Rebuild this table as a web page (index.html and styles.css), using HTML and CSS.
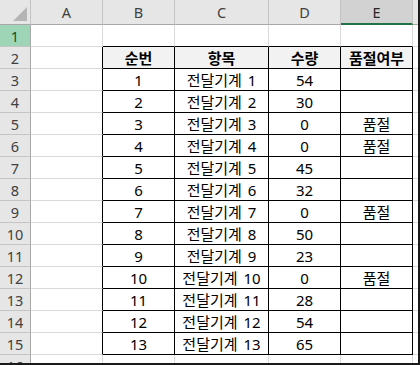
FILE: index.html
```html
<!DOCTYPE html>
<html lang="ko">
<head>
<meta charset="utf-8">
<link rel="stylesheet" href="styles.css">
</head>
<body>
<div class="sheet">
  <div class="grid">
    <div class="corner"><svg class="tri" width="14" height="14" viewBox="0 0 14 14"><polygon points="14,0 14,14 0,14" fill="#b5b5b5"/></svg></div>
    <div class="ch">A</div>
    <div class="ch">B</div>
    <div class="ch">C</div>
    <div class="ch">D</div>
    <div class="ch sel">E</div>
    <div class="ch end"></div>

    <div class="rh sel">1</div>
    <div class="c"></div><div class="c bb"></div><div class="c bb"></div><div class="c bb"></div><div class="c bb"></div><div class="c x"></div>

    <div class="rh">2</div>
    <div class="c br"></div><div class="c t th">순번</div><div class="c t th">항목</div><div class="c t th">수량</div><div class="c t th">품절여부</div><div class="c x"></div>

    <div class="rh">3</div>
    <div class="c br"></div><div class="c t">1</div><div class="c t">전달기계 1</div><div class="c t">54</div><div class="c t"></div><div class="c x"></div>
    <div class="rh">4</div>
    <div class="c br"></div><div class="c t">2</div><div class="c t">전달기계 2</div><div class="c t">30</div><div class="c t"></div><div class="c x"></div>
    <div class="rh">5</div>
    <div class="c br"></div><div class="c t">3</div><div class="c t">전달기계 3</div><div class="c t">0</div><div class="c t">품절</div><div class="c x"></div>
    <div class="rh">6</div>
    <div class="c br"></div><div class="c t">4</div><div class="c t">전달기계 4</div><div class="c t">0</div><div class="c t">품절</div><div class="c x"></div>
    <div class="rh">7</div>
    <div class="c br"></div><div class="c t">5</div><div class="c t">전달기계 5</div><div class="c t">45</div><div class="c t"></div><div class="c x"></div>
    <div class="rh">8</div>
    <div class="c br"></div><div class="c t">6</div><div class="c t">전달기계 6</div><div class="c t">32</div><div class="c t"></div><div class="c x"></div>
    <div class="rh">9</div>
    <div class="c br"></div><div class="c t">7</div><div class="c t">전달기계 7</div><div class="c t">0</div><div class="c t">품절</div><div class="c x"></div>
    <div class="rh">10</div>
    <div class="c br"></div><div class="c t">8</div><div class="c t">전달기계 8</div><div class="c t">50</div><div class="c t"></div><div class="c x"></div>
    <div class="rh">11</div>
    <div class="c br"></div><div class="c t">9</div><div class="c t">전달기계 9</div><div class="c t">23</div><div class="c t"></div><div class="c x"></div>
    <div class="rh">12</div>
    <div class="c br"></div><div class="c t">10</div><div class="c t">전달기계 10</div><div class="c t">0</div><div class="c t">품절</div><div class="c x"></div>
    <div class="rh">13</div>
    <div class="c br"></div><div class="c t">11</div><div class="c t">전달기계 11</div><div class="c t">28</div><div class="c t"></div><div class="c x"></div>
    <div class="rh">14</div>
    <div class="c br"></div><div class="c t">12</div><div class="c t">전달기계 12</div><div class="c t">54</div><div class="c t"></div><div class="c x"></div>
    <div class="rh">15</div>
    <div class="c br"></div><div class="c t">13</div><div class="c t">전달기계 13</div><div class="c t">65</div><div class="c t"></div><div class="c x"></div>

    <div class="rh">16</div>
    <div class="c"></div><div class="c"></div><div class="c"></div><div class="c"></div><div class="c"></div><div class="c x"></div>
  </div>
</div>
</body>
</html>
```
FILE: styles.css
```css
html, body {
  margin: 0;
  padding: 0;
  background: #ffffff;
}
.sheet {
  box-sizing: border-box;
  width: 420px;
  height: 365px;
  overflow: hidden;
  border-right: 2px solid #1a1a1a;
  border-bottom: 2px solid #1a1a1a;
  font-family: "Noto Sans", "Noto Sans CJK KR", sans-serif;
  font-size: 15px;
  word-spacing: 2px;
  color: #000;
}
.grid {
  display: grid;
  grid-template-columns: 31px 72px 72px 94px 72px 72px 1fr;
  grid-template-rows: 25px;
  grid-auto-rows: 22px;
}
.grid > div {
  box-sizing: border-box;
  display: flex;
  align-items: center;
  justify-content: center;
  border-right: 1px solid #dadada;
  border-bottom: 1px solid #dadada;
  white-space: nowrap;
  line-height: 1;
  padding-top: 1px;
}
.corner {
  background: #e6e6e6;
  border-right: 1px solid #c4c4c4 !important;
  border-bottom: 1px solid #a8a8a8 !important;
  position: relative;
}
.tri {
  position: absolute;
  right: 3px;
  bottom: 3px;
}
.ch {
  background: #e6e6e6;
  color: #404040;
  font-size: 14.5px;
  border-right: 1px solid #c4c4c4 !important;
  border-bottom: 1px solid #a8a8a8 !important;
}
.ch.sel {
  background: #d2d2d2;
  color: #262626;
  border-bottom: 2px solid #217346 !important;
}
.ch.end {
  border-right: none !important;
}
.rh {
  background: #e6e6e6;
  color: #404040;
  font-size: 14.5px;
  border-right: 1px solid #a8a8a8 !important;
  border-bottom: 1px solid #c4c4c4 !important;
}
.rh.sel {
  background: #9fd5b7;
  color: #0f4d2b;
}
.grid > .br {
  border-right: 1px solid #000;
}
.grid > .bb {
  border-bottom: 1px solid #000;
}
.grid > .t {
  border-right: 1px solid #000;
  border-bottom: 1px solid #000;
}
.th {
  background: #f2f2f2;
  font-weight: bold;
}
.grid > .x {
  border-right: none;
}
```
